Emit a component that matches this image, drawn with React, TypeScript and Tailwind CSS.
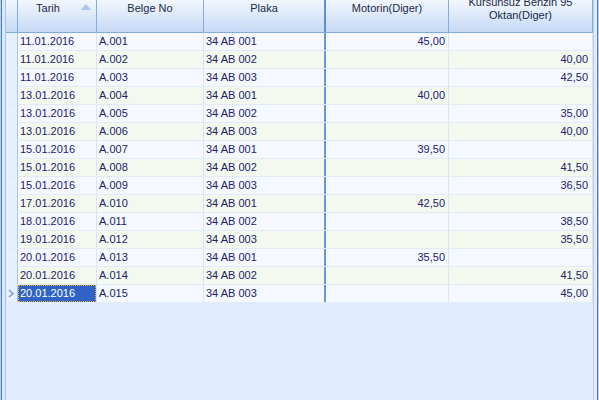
import React from "react";

type Row = { tarih: string; belge: string; plaka: string; motorin: string; benzin: string };

const rows: Row[] = [
   { tarih: "11.01.2016", belge: "A.001", plaka: "34 AB 001", motorin: "45,00", benzin: "" },
   { tarih: "11.01.2016", belge: "A.002", plaka: "34 AB 002", motorin: "", benzin: "40,00" },
   { tarih: "11.01.2016", belge: "A.003", plaka: "34 AB 003", motorin: "", benzin: "42,50" },
   { tarih: "13.01.2016", belge: "A.004", plaka: "34 AB 001", motorin: "40,00", benzin: "" },
   { tarih: "13.01.2016", belge: "A.005", plaka: "34 AB 002", motorin: "", benzin: "35,00" },
   { tarih: "13.01.2016", belge: "A.006", plaka: "34 AB 003", motorin: "", benzin: "40,00" },
   { tarih: "15.01.2016", belge: "A.007", plaka: "34 AB 001", motorin: "39,50", benzin: "" },
   { tarih: "15.01.2016", belge: "A.008", plaka: "34 AB 002", motorin: "", benzin: "41,50" },
   { tarih: "15.01.2016", belge: "A.009", plaka: "34 AB 003", motorin: "", benzin: "36,50" },
   { tarih: "17.01.2016", belge: "A.010", plaka: "34 AB 001", motorin: "42,50", benzin: "" },
   { tarih: "18.01.2016", belge: "A.011", plaka: "34 AB 002", motorin: "", benzin: "38,50" },
   { tarih: "19.01.2016", belge: "A.012", plaka: "34 AB 003", motorin: "", benzin: "35,50" },
   { tarih: "20.01.2016", belge: "A.013", plaka: "34 AB 001", motorin: "35,50", benzin: "" },
   { tarih: "20.01.2016", belge: "A.014", plaka: "34 AB 002", motorin: "", benzin: "41,50" },
   { tarih: "20.01.2016", belge: "A.015", plaka: "34 AB 003", motorin: "", benzin: "45,00" },
];

const headCell =
   "relative h-full overflow-hidden bg-gradient-to-b from-[#f2f7fe] to-[#c5d9f5] border-[#86aadd]";

function HeadLabel({ children, className = "" }: { children: React.ReactNode; className?: string }) {
   return (
      <div className={`h-[17px] flex items-center justify-center text-center leading-[13px] ${className}`}>
         <span>{children}</span>
      </div>
   );
}

function Header() {
   return (
      <div className="flex h-[33px] border-b border-[#86aadd] text-[#1b2a46]">
         <div className={`${headCell} w-[12px] border-r`} />
         <div className={`${headCell} w-[79px] border-r`}>
            <HeadLabel className="pr-[18px]">Tarih</HeadLabel>
            <svg className="absolute left-[63px] top-[4px]" width="10" height="6" viewBox="0 0 10 6">
               <path d="M5 0 L10 6 L0 6 Z" fill="#a9c6ee" />
            </svg>
         </div>
         <div className={`${headCell} w-[107px] border-r`}>
            <HeadLabel>Belge No</HeadLabel>
         </div>
         <div className={`${headCell} w-[122px] border-r-2 border-r-[#5e8fd4]`}>
            <HeadLabel>Plaka</HeadLabel>
         </div>
         <div className={`${headCell} w-[123px] border-r`}>
            <HeadLabel>Motorin(Diger)</HeadLabel>
         </div>
         <div className={`${headCell} w-[144px] border-r`}>
            <HeadLabel className="px-[4px]">Kursunsuz Benzin 95 Oktan(Diger)</HeadLabel>
         </div>
      </div>
   );
}

function DataRow({ row, index, selected }: { row: Row; index: number; selected: boolean }) {
   const bg = index % 2 === 0 ? "bg-[#f5f9ff]" : "bg-[#f3f9ee]";
   const cell = "h-full border-r border-[#d9e5f6] leading-[17px] whitespace-nowrap overflow-hidden";
   return (
      <div className={`flex h-[18px] border-b border-[#e2ebf8] ${bg} text-[#22226a]`}>
         <div className="w-[12px] h-full border-r border-[#a9c4ea] bg-[#e6f0fd] flex items-center">
            {selected && (
               <svg width="8" height="9" viewBox="0 0 8 9" className="ml-[1px]">
                  <path d="M2 1 L6 4.5 L2 8" fill="none" stroke="#7f9fcf" strokeWidth="1.5" />
               </svg>
            )}
         </div>
         <div className={`${cell} w-[79px] ${selected ? "p-0" : "pl-[2px]"}`}>
            {selected ? (
               <div className="h-full w-[78px] bg-[#3163c4] text-white border border-dotted border-[#e7ad4c] pl-[1px] leading-[15px]">
                  {row.tarih}
               </div>
            ) : (
               row.tarih
            )}
         </div>
         <div className={`${cell} w-[107px] pl-[2px]`}>{row.belge}</div>
         <div className={`h-full w-[122px] border-r-2 border-[#6a97d8] leading-[17px] pl-[2px] whitespace-nowrap`}>
            {row.plaka}
         </div>
         <div className={`${cell} w-[123px] text-right pr-[3px]`}>{row.motorin}</div>
         <div className={`${cell} w-[144px] text-right pr-[4px]`}>{row.benzin}</div>
      </div>
   );
}

export default function App() {
   return (
      <div className="w-[599px] h-[400px] flex bg-[#e1edfe] font-['Liberation_Sans',Arial,sans-serif] text-[11px] overflow-hidden">
         <div className="w-[1px] h-full bg-[#b4ccee]" />
         <div className="w-[1px] h-full bg-[#4f7fc2]" />
         <div className="w-[3px] h-full bg-[#dce9fc]" />
         <div className="w-[1px] h-full bg-[#a9c4ea]" />
         <div className="w-[587px] h-full flex flex-col">
            <Header />
            {rows.map((r, i) => (
               <DataRow key={r.belge} row={r} index={i} selected={i === rows.length - 1} />
            ))}
         </div>
         <div className="w-[1px] h-full bg-[#b8d0f0]" />
         <div className="w-[3px] h-full bg-[#e1edfe]" />
         <div className="w-[1px] h-full bg-[#4f7fc2]" />
         <div className="w-[1px] h-full bg-[#b4ccee]" />
      </div>
   );
}
